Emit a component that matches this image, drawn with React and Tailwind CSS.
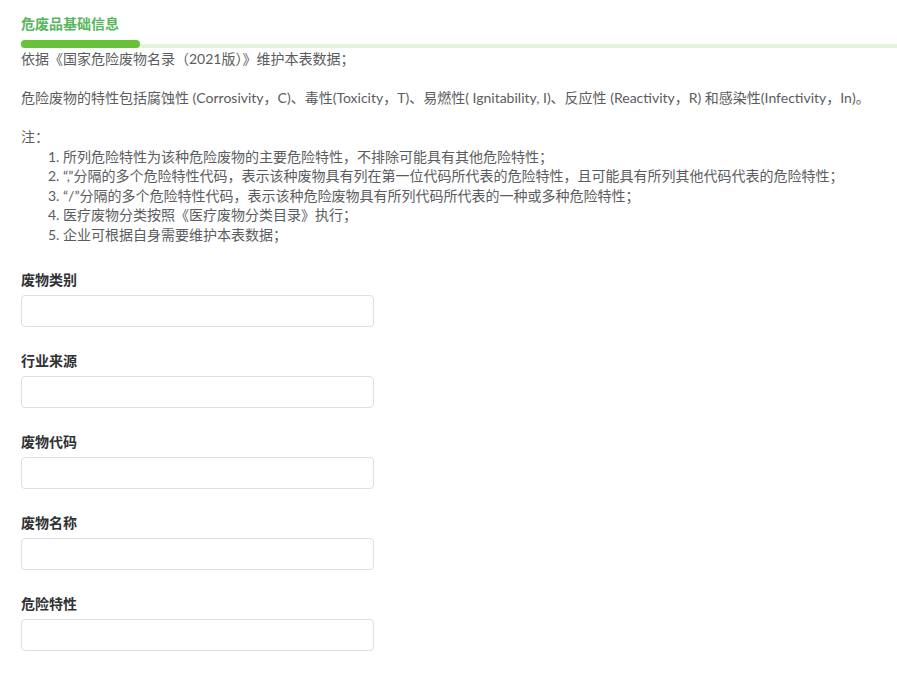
const notes = [
  '1. 所列危险特性为该种危险废物的主要危险特性，不排除可能具有其他危险特性；',
  '2. “,”分隔的多个危险特性代码，表示该种废物具有列在第一位代码所代表的危险特性，且可能具有所列其他代码代表的危险特性；',
  '3. “/”分隔的多个危险特性代码，表示该种危险废物具有所列代码所代表的一种或多种危险特性；',
  '4. 医疗废物分类按照《医疗废物分类目录》执行；',
  '5. 企业可根据自身需要维护本表数据；',
];

const fields = ['废物类别', '行业来源', '废物代码', '废物名称', '危险特性'];

const Field = ({ label }) => (
  <div className="mb-[24px]">
    <div className="text-[14px] leading-[20px] font-bold text-[#303133] mb-[5px]">{label}</div>
    <input
      type="text"
      className="block w-[353px] h-[32px] px-3 text-[13px] text-[#606266] bg-white border border-[#dcdfe6] rounded-[4px] outline-none"
    />
  </div>
);

export default function App() {
  return (
    <div
      className="min-h-[681px] bg-white pt-[14px] pl-[21px]"
      style={{ fontFamily: 'Lato, "Noto Sans CJK SC", sans-serif' }}
    >
      <div className="text-[14px] leading-[20px] font-bold text-[#58b65e]">危废品基础信息</div>
      <div className="relative h-[8px] mt-[6px]">
        <div className="absolute bottom-0 left-0 right-0 h-[4px] bg-[#e1f3d8]" />
        <div className="relative h-[8px] w-[119px] rounded-full bg-[#67c23a]" />
      </div>

      <div className="text-[14px] leading-[19.5px] text-[#5a5c60] mt-[1px] mb-[26px]">
        <p>依据《国家危险废物名录（2021版）》维护本表数据；</p>
        <p className="mt-[19.5px]">
          危险废物的特性包括腐蚀性 (Corrosivity，C)、毒性(Toxicity，T)、易燃性( Ignitability, I)、反应性 (Reactivity，R) 和感染性(Infectivity，In)。
        </p>
        <p className="mt-[19.5px]">注：</p>
        <ul className="pl-[27px]">
          {notes.map((n) => (
            <li key={n}>{n}</li>
          ))}
        </ul>
      </div>

      {fields.map((f) => (
        <Field key={f} label={f} />
      ))}
    </div>
  );
}
